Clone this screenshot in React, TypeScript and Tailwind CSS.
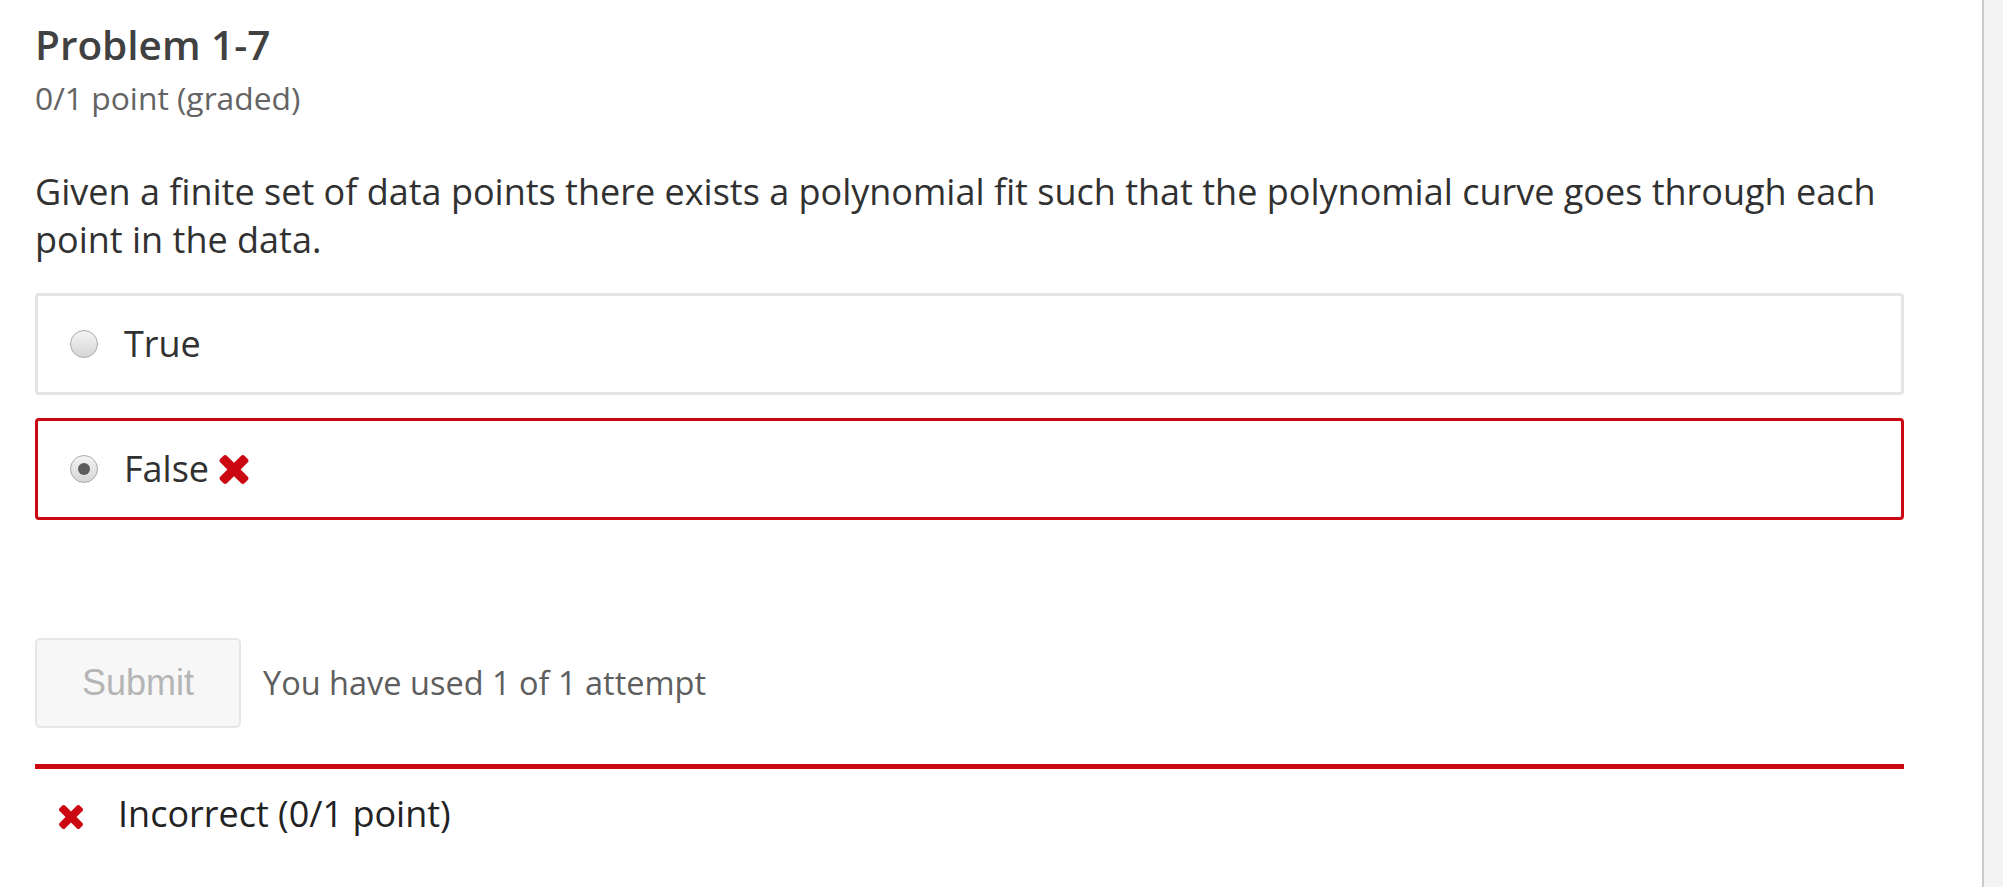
import React from "react";

function TimesIcon({ className }: { className: string }) {
  return (
    <svg className={className} viewBox="302 366 1188 1188" fill="currentColor" aria-hidden="true">
      <path d="M1490 1322q0 40-28 68l-136 136q-28 28-68 28t-68-28l-294-294-294 294q-28 28-68 28t-68-28l-136-136q-28-28-28-68t28-68l294-294-294-294q-28-28-28-68t28-68l136-136q28-28 68-28t68 28l294 294 294-294q28-28 68-28t68 28l136 136q28 28 28 68t-28 68l-294 294 294 294q28 28 28 68z" />
    </svg>
  );
}

function Radio({ checked }: { checked?: boolean }) {
  return (
    <div className="w-[28px] h-[28px] rounded-full border-[1.5px] border-[#a9a9a9] bg-gradient-to-b from-[#f4f4f4] to-[#d6d6d6] flex items-center justify-center shrink-0">
      {checked && <div className="w-[12px] h-[12px] rounded-full bg-[#5c5c5c]" />}
    </div>
  );
}

export default function App() {
  return (
    <div className="flex min-h-screen w-full bg-white" style={{ fontFamily: '"Open Sans", "Noto Sans", sans-serif' }}>
      <main className="flex-1 pl-[35px] pr-[78px] pt-[21px]">
        <h2 className="text-[40.5px] leading-[48px] font-semibold text-[#414141]">Problem 1-7</h2>
        <div className="mt-[9px] text-[31.8px] leading-[40px] text-[#646464]">0/1 point (graded)</div>
        <p className="mt-[50px] text-[36px] leading-[48px] text-[#313131]">
          Given a finite set of data points there exists a polynomial fit such that the polynomial curve goes through each point in the data.
        </p>
        <div className="mt-[29px] flex flex-col gap-[23px]">
          <div className="h-[102px] border-[3px] border-[#e4e4e4] rounded-[4px] flex items-center pl-[32px] gap-[26px]">
            <Radio />
            <span className="text-[36px] leading-[48px] text-[#313131]">True</span>
          </div>
          <div className="h-[102px] border-[3px] border-[#cb0712] rounded-[4px] flex items-center pl-[32px] gap-[26px]">
            <Radio checked />
            <span className="flex items-center gap-[10px]">
              <span className="text-[36px] leading-[48px] text-[#313131]">False</span>
              <TimesIcon className="w-[30px] h-[29px] text-[#cb0712]" />
            </span>
          </div>
        </div>
        <div className="mt-[118px] flex items-center gap-[22px]">
          <button
            disabled
            className="h-[90px] w-[206px] border-2 border-[#e6e6e6] bg-[#f7f7f7] rounded-[5px] text-[36px] text-[#b5b5b5] flex items-center justify-center"
            style={{ fontFamily: '"Liberation Sans", Arial, sans-serif' }}
          >
            Submit
          </button>
          <span className="text-[32.5px] text-[#5e5e5e]">You have used 1 of 1 attempt</span>
        </div>
        <div className="mt-[36px] h-[5px] bg-[#cb0712]" />
        <div className="mt-[21px] flex items-center pl-[24px] gap-[35px]">
          <TimesIcon className="w-[24px] h-[24px] text-[#cb0712] mt-[5px]" />
          <span className="text-[36px] leading-[48px] text-[#222222]">Incorrect (0/1 point)</span>
        </div>
      </main>
      <aside className="w-[21px] shrink-0 border-l-2 border-[#c9c9c9] bg-[#f3f3f3]" />
    </div>
  );
}
